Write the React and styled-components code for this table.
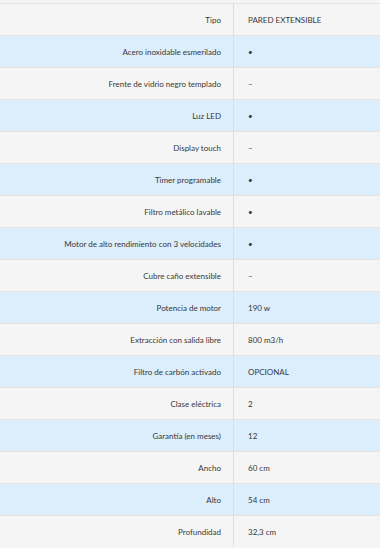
import React from "react";
import styled, { createGlobalStyle } from "styled-components";

const Global = createGlobalStyle`
  html, body { margin: 0; padding: 0; background: #f5f5f5; }
  body { font-family: Lato, "Open Sans", sans-serif; }
`;

const Table = styled.div`
  display: flex;
  flex-direction: column;
  padding-top: 3px;
  background: #f5f5f5;
`;

const Row = styled.div`
  display: grid;
  grid-template-columns: 234px 1fr;
  height: 31px;
  border-top: 1px solid #e3e3e3;
  background: ${(p) => (p.$alt ? "#dcedfc" : "#f5f5f5")};
`;

const Label = styled.div`
  display: flex;
  align-items: center;
  justify-content: flex-end;
  padding-right: 12px;
  border-right: 1px solid #dedede;
  font-size: 8px;
  color: #383838;
`;

const Value = styled.div`
  display: flex;
  align-items: center;
  padding-left: 14px;
  font-size: 8px;
  color: #383838;
`;

const rows = [
  ["Tipo", "PARED EXTENSIBLE"],
  ["Acero inoxidable esmerilado", "•"],
  ["Frente de vidrio negro templado", "–"],
  ["Luz LED", "•"],
  ["Display touch", "–"],
  ["Timer programable", "•"],
  ["Filtro metálico lavable", "•"],
  ["Motor de alto rendimiento con 3 velocidades", "•"],
  ["Cubre caño extensible", "–"],
  ["Potencia de motor", "190 w"],
  ["Extracción con salida libre", "800 m3/h"],
  ["Filtro de carbón activado", "OPCIONAL"],
  ["Clase eléctrica", "2"],
  ["Garantía (en meses)", "12"],
  ["Ancho", "60 cm"],
  ["Alto", "54 cm"],
  ["Profundidad", "32,3 cm"],
];

export default function App() {
  return (
    <>
      <Global />
      <Table>
        {rows.map(([l, v], i) => (
          <Row key={l} $alt={i % 2 === 1}>
            <Label>{l}</Label>
            <Value>{v}</Value>
          </Row>
        ))}
      </Table>
    </>
  );
}
